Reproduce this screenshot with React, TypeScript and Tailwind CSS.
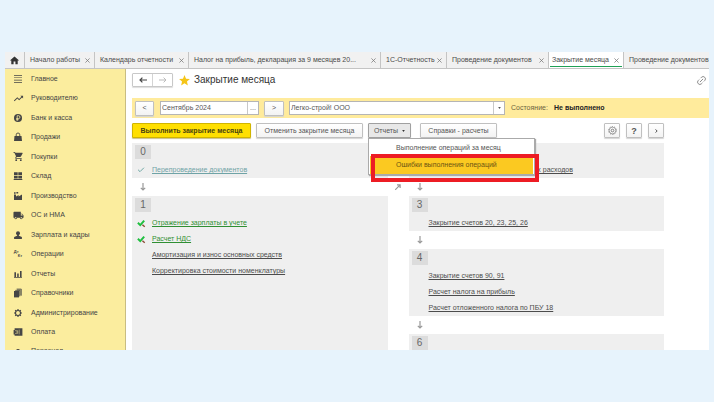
import React from "react";
import { MdHome, MdTrendingUp, MdShoppingCart, MdLocalShipping, MdStar } from "react-icons/md";
import { Link2, Check } from "lucide-react";

const tabs = [
  { title: "Начало работы", width: "w-[70px]" },
  { title: "Календарь отчетности", width: "w-[94px]" },
  { title: "Налог на прибыль, декларация за 9 месяцев 20...", width: "w-[192px]" },
  { title: "1С-Отчетность", width: "w-[66px]" },
  { title: "Проведение документов", width: "w-[102px]" },
  { title: "Закрытие месяца", width: "w-[75px]", active: true },
  { title: "Проведение документов", width: "w-[102px]" },
];

const icon = "size-[10px] fill-current";

const menu = [
  {
    title: "Главное",
    icon: (
      <svg viewBox="0 0 10 10" className={icon}>
        <path d="M1 1h8v.7H1zM1 3.4h8v.7H1zM1 5.8h8v.7H1zM1 8.2h8v.7H1z" />
      </svg>
    ),
  },
  { title: "Руководителю", icon: <MdTrendingUp size={11} /> },
  {
    title: "Банк и касса",
    icon: (
      <svg viewBox="0 0 10 10" className={icon}>
        <circle cx="5" cy="5" r="4" />
        <path d="M4.2 7.8V2.7h1.3a1.4 1.4 0 0 1 0 2.9H3.2M3.2 6.7h2.4" fill="none" stroke="#fbed9e" strokeWidth="0.8" />
      </svg>
    ),
  },
  {
    title: "Продажи",
    icon: (
      <svg viewBox="0 0 10 10" className={icon}>
        <path d="M1.5 4h7l.5 5H1z" />
        <path d="M3.2 5V2.8a1.8 1.8 0 0 1 3.6 0V5" fill="none" stroke="currentColor" strokeWidth="0.9" />
      </svg>
    ),
  },
  {
    title: "Покупки",
    icon: <MdShoppingCart size={11} />,
  },
  {
    title: "Склад",
    icon: (
      <svg viewBox="0 0 10 10" className={icon}>
        <path d="M1 1.3h3.7v3H1zM5.3 1.3H9v3H5.3zM1 4.9h3.7v2.7H1zM5.3 4.9H9v2.7H5.3zM.7 8h8.6v.9H.7z" />
      </svg>
    ),
  },
  {
    title: "Производство",
    icon: (
      <svg viewBox="0 0 10 10" className={icon}>
        <path d="M1 9V3.6h1.8l.4 2L5.6 4v1.6L9 3.6V9zM1 1.2h1.6v1.5H1zM3.4 1h1.8v1.4H3.4z" />
      </svg>
    ),
  },
  { title: "ОС и НМА", icon: <MdLocalShipping size={11} /> },
  {
    title: "Зарплата и кадры",
    icon: (
      <svg viewBox="0 0 10 10" className={icon}>
        <circle cx="5" cy="3.2" r="2" />
        <path d="M4.1 4.5h1.8v1.3l3 1.1V9H1.1V6.9l3-1.1z" />
      </svg>
    ),
  },
  {
    title: "Операции",
    icon: (
      <span className="flex flex-col text-[4px] leading-[4px] font-bold">
        <span>Дт</span>
        <span className="pl-1">Кт</span>
      </span>
    ),
  },
  {
    title: "Отчеты",
    icon: (
      <svg viewBox="0 0 10 10" className={icon}>
        <path d="M1.4 3.2H3V8H1.4zM4.2 4.6h1.5V8H4.2zM7 2h1.6v6H7zM1 8h8v.8H1z" />
      </svg>
    ),
  },
  {
    title: "Справочники",
    icon: (
      <svg viewBox="0 0 10 10" className={icon}>
        <path d="M1 3h5v6.4H1z" />
        <path d="M2.2 2.4h4.5v6M3.6 1.1h4.7v6.6" fill="none" stroke="currentColor" strokeWidth="0.8" />
        <path d="M4 1.6h3.8v5.8H6.9V2.5H4z" opacity="0.6" />
      </svg>
    ),
  },
  {
    title: "Администрирование",
    icon: (
      <svg viewBox="0 0 10 10" className={icon}>
        <circle cx="5" cy="5" r="2.5" fill="none" stroke="currentColor" strokeWidth="1.1" />
        <path
          d="M5 1v1.5M5 7.5V9M1 5h1.5M7.5 5H9M2.2 2.2l1 1M6.8 6.8l1 1M2.2 7.8l1-1M6.8 3.2l1-1"
          stroke="currentColor"
          strokeWidth="1.2"
        />
      </svg>
    ),
  },
  {
    title: "Оплата",
    icon: (
      <svg viewBox="0 0 10 10" className={icon}>
        <path d="M1.6 1.2H9.4v7.6H1.6V7.4H.6V3h1z" />
        <path d="M2 3.7h2.7v2.7H2M3 5h1.6M6.2 2.6v4.8" fill="none" stroke="#fbed9e" strokeWidth="0.5" />
      </svg>
    ),
  },
];

const buttonBase = "flex h-[15px] shrink-0 items-center justify-center rounded-[1px] border shadow-[0_1px_1px_#d4d4d4]";
const button = `${buttonBase} border-[#c0c0c0] bg-linear-to-b from-white to-[#f3f3f3] text-[#555]`;

type Operation = { title: string; state?: "done" | "passed" };

const DoneMark = () => (
  <svg viewBox="0 0 10 10" className="size-[9px]">
    <path d="M1 4.2l2.6 2.6L8 1.8" fill="none" stroke="#1fbf3f" strokeWidth="2.2" />
    <path d="M6 6.4l2.6 2.2" stroke="#8a4a35" strokeWidth="1.6" />
  </svg>
);

const Stage = ({ number, operations, grow }: { number: number; operations: Operation[]; grow?: boolean }) => (
  <section className={`bg-[#efefef] pt-[2px] ${grow ? "flex-1" : "shrink-0"}`}>
    <h2 className="mb-[3px] ml-[3px] flex h-[14px] w-4 items-center justify-center bg-[#dcdcdc] text-[10px] text-[#666]">
      {number}
    </h2>
    <ul>
      {operations.map((item) => (
        <li key={item.title} className="flex h-4 items-center whitespace-nowrap">
          <span className="flex w-5 shrink-0 items-center pl-[5px]">
            {item.state === "passed" && <Check size={8} strokeWidth={3} className="text-[#6fa8a5]" />}
            {item.state === "done" && <DoneMark />}
          </span>
          <a
            href="#"
            className={`underline ${
              item.state === "done" ? "text-[#2f8f33]" : item.state === "passed" ? "text-[#6fa3a6]" : "text-[#4c4c4c]"
            }`}
          >
            {item.title}
          </a>
        </li>
      ))}
    </ul>
  </section>
);

const Arrow = ({ diagonal }: { diagonal?: boolean }) => (
  <svg
    viewBox="0 0 8 8"
    className={`size-2 fill-none stroke-[#999] ${diagonal ? "rotate-[225deg]" : ""}`}
    strokeWidth="1.2"
  >
    <path d="M4 0v7M1.8 4.8L4 7l2.2-2.2" />
  </svg>
);

const ArrowRow = () => (
  <div className="flex h-[18px] shrink-0 items-center pl-[7px]">
    <Arrow />
  </div>
);

const TabBar = () => (
  <nav className="flex h-[17px] shrink-0 overflow-hidden border-b border-[#c4c4c4] bg-[#f1f1f1]">
    <button aria-label="Начальная страница" className="flex w-[19px] shrink-0 items-center justify-center text-[#333]">
      <MdHome size={11} />
    </button>
    {tabs.map((tab, index) => (
      <div
        key={index}
        className={`relative flex shrink-0 items-center justify-between border-l border-[#c4c4c4] pr-1 whitespace-nowrap ${tab.width} ${
          tab.active ? "bg-white pl-[3px]" : "pl-[5px]"
        }`}
      >
        <button>{tab.title}</button>
        <button aria-label="Закрыть" className="text-[#777]">
          <svg viewBox="0 0 6 6" className="size-[5px] stroke-current" strokeWidth="0.9">
            <path d="M.5 .5l5 5M5.5 .5l-5 5" />
          </svg>
        </button>
        {tab.active && <span className="absolute inset-x-px bottom-px h-px bg-[#1fa055]" />}
      </div>
    ))}
  </nav>
);

const Sidebar = () => (
  <aside className="w-[121px] shrink-0 overflow-hidden border-r border-[#c9bd82] bg-[#fbed9e]">
    <ul className="flex h-full flex-col">
      {menu.map((item) => (
        <li key={item.title} className="min-h-4 flex-1">
          <a href="#" className="flex h-full items-center text-[#454545]">
            <span className="flex w-[26px] justify-center">{item.icon}</span>
            {item.title}
          </a>
        </li>
      ))}
      <li className="h-2 shrink-0">
        <a href="#" className="flex h-[18px] items-center text-[#454545]">
          <span className="flex w-[26px] justify-center">
            <svg viewBox="0 0 10 10" className={icon}>
              <circle cx="5" cy="5" r="2" />
            </svg>
          </span>
          Персонал
        </a>
      </li>
    </ul>
  </aside>
);

const Heading = () => (
  <header className="flex h-[29px] shrink-0 items-center pr-[2px] pb-[7px]">
    <div className="flex h-[14px] rounded-[1px] border border-[#c8c8c8] shadow-[0_1px_1px_#dedede]">
      <button aria-label="Назад" className="flex w-[19px] items-center justify-center text-[#444]">
        <svg viewBox="0 0 8 6" className="h-[6px] w-2 fill-none stroke-current" strokeWidth="1.2">
          <path d="M8 3H1M3.4 .6L1 3l2.4 2.4" />
        </svg>
      </button>
      <button aria-label="Вперед" className="flex w-5 items-center justify-center border-l border-[#d4d4d4] text-[#bbb]">
        <svg viewBox="0 0 8 6" className="h-[6px] w-2 fill-none stroke-current">
          <path d="M0 3h7M4.6 .6L7 3 4.6 5.4" />
        </svg>
      </button>
    </div>
    <MdStar size={13} className="ml-[5px] text-[#f5c518]" />
    <h1 className="ml-[3px] flex-1 text-[10px] text-[#333]">Закрытие месяца</h1>
    <button aria-label="Получить ссылку" className="text-[#888]">
      <Link2 size={11} className="-rotate-45" />
    </button>
  </header>
);

const Filters = () => (
  <div className="flex h-5 shrink-0 items-center bg-[#ffeb9c] pl-[3px] text-[#555]">
    <button aria-label="Предыдущий месяц" className={`${button} w-[19px]`}>
      &lt;
    </button>
    <div className="ml-[6px] flex h-[14px] w-[99px] border border-[#b5b5b5] bg-white">
      <input aria-label="Период" defaultValue="Сентябрь 2024" className="min-w-0 flex-1 pl-px outline-none" />
      <button aria-label="Выбрать период" className="w-[11px] border-l border-[#c8c8c8]">
        ...
      </button>
    </div>
    <button aria-label="Следующий месяц" className={`${button} ml-[5px] w-5`}>
      &gt;
    </button>
    <div className="ml-[5px] flex h-[14px] w-[216px] border border-[#b5b5b5] bg-white">
      <select aria-label="Организация" className="flex-1 appearance-none pl-px outline-none">
        <option>Легко-строй! ООО</option>
      </select>
      <span className="pointer-events-none flex w-[11px] items-center justify-center border-l border-[#c8c8c8]">
        <svg viewBox="0 0 4 3" className="h-[2px] w-[3px] fill-[#555]">
          <path d="M0 0h4L2 3z" />
        </svg>
      </span>
    </div>
    <span className="ml-[6px] w-[43px] text-[#6c643f]">Состояние:</span>
    <span className="font-bold text-[#222]">Не выполнено</span>
  </div>
);

const ReportsMenu = () => (
  <div className="relative ml-[5px]">
    <button className={`${buttonBase} w-[43px] border-[#a0a0a0] bg-[#e8e8e8] text-[#555]`}>
      Отчеты
      <svg viewBox="0 0 4 3" className="ml-1 h-[2px] w-[3px] fill-[#333]">
        <path d="M0 0h4L2 3z" />
      </svg>
    </button>
    <div className="absolute top-[15px] left-0 z-10 flex w-[167px] flex-col border border-[#aaa] bg-white px-px text-[#555] shadow-[1px_1px_1px_#aaa]">
      <button className="h-[17px] pl-[26px] text-left">Выполнение операций за месяц</button>
      <button className="h-[18px] bg-[#fbc921] pl-[26px] text-left text-[#6b5413]">Ошибки выполнения операций</button>
    </div>
    {/* Highlight around the errors item */}
    <div className="pointer-events-none absolute top-[31px] left-[3px] z-20 h-7 w-[168px] border-4 border-[#ed1c24]" />
  </div>
);

const Toolbar = () => (
  <div className="mt-[5px] flex shrink-0 items-center pr-[45px]">
    <button className="h-[15px] w-[119px] rounded-[1px] border border-[#d0b400] bg-[#ffdf00] font-bold text-[#4a4310] shadow-[0_1px_1px_#c9c08a]">
      Выполнить закрытие месяца
    </button>
    <button className={`${button} ml-[5px] w-[107px]`}>Отменить закрытие месяца</button>
    <ReportsMenu />
    <button className={`${button} ml-[9px] w-[77px]`}>Справки - расчеты</button>
    <div className="ml-auto flex gap-[6px]">
      <button aria-label="Настройки" className={`${button} w-4`}>
        <svg viewBox="0 0 10 10" className="size-[9px] fill-none stroke-[#777]">
          <circle cx="5" cy="5" r="3.7" strokeWidth="0.7" />
          <circle cx="5" cy="5" r="4.4" strokeWidth="0.8" strokeDasharray="1.4 1.36" />
          <circle cx="5" cy="5" r="1.5" strokeWidth="1" />
        </svg>
      </button>
      <button aria-label="Справка" className={`${button} w-4 text-[9px] font-bold`}>
        ?
      </button>
      <button aria-label="Еще" className={`${button} w-4`}>
        <svg viewBox="0 0 4 6" className="h-1 w-[3px] fill-none stroke-[#444]" strokeWidth="1.4">
          <path d="M.6 .6L3 3 .6 5.4" />
        </svg>
      </button>
    </div>
  </div>
);

const Stages = () => (
  <div className="mt-[5px] grid min-h-0 flex-1 grid-cols-[1fr_21px_1fr] overflow-hidden pr-[45px]">
    <div className="flex min-h-0 flex-col">
      <Stage number={0} operations={[{ title: "Перепроведение документов", state: "passed" }]} />
      <ArrowRow />
      <Stage
        number={1}
        grow
        operations={[
          { title: "Отражение зарплаты в учете", state: "done" },
          { title: "Расчет НДС", state: "done" },
          { title: "Амортизация и износ основных средств" },
          { title: "Корректировка стоимости номенклатуры" },
        ]}
      />
    </div>
    <div className="flex justify-center pt-10">
      <Arrow diagonal />
    </div>
    <div className="flex min-h-0 flex-col">
      <Stage number={2} operations={[{ title: "Расчет долей списания косвенных расходов" }]} />
      <ArrowRow />
      <Stage number={3} operations={[{ title: "Закрытие счетов 20, 23, 25, 26" }]} />
      <ArrowRow />
      <Stage
        number={4}
        operations={[
          { title: "Закрытие счетов 90, 91" },
          { title: "Расчет налога на прибыль" },
          { title: "Расчет отложенного налога по ПБУ 18" },
        ]}
      />
      <ArrowRow />
      <Stage number={6} grow operations={[]} />
    </div>
  </div>
);

const App = () => {
  return (
    <div className="flex h-screen flex-col bg-[#e7f3fc] px-[5px] py-[52px] font-['Liberation_Sans',Arial,sans-serif] text-[7px] leading-[10px] text-[#4a4a4a]">
      <div className="flex min-h-0 flex-1 flex-col overflow-hidden bg-white">
        <TabBar />
        <div className="flex min-h-0 flex-1">
          <Sidebar />
          <main className="flex min-w-0 flex-1 flex-col pl-[6px]">
            <Heading />
            <Filters />
            <Toolbar />
            <Stages />
          </main>
        </div>
      </div>
    </div>
  );
};

export default App;
